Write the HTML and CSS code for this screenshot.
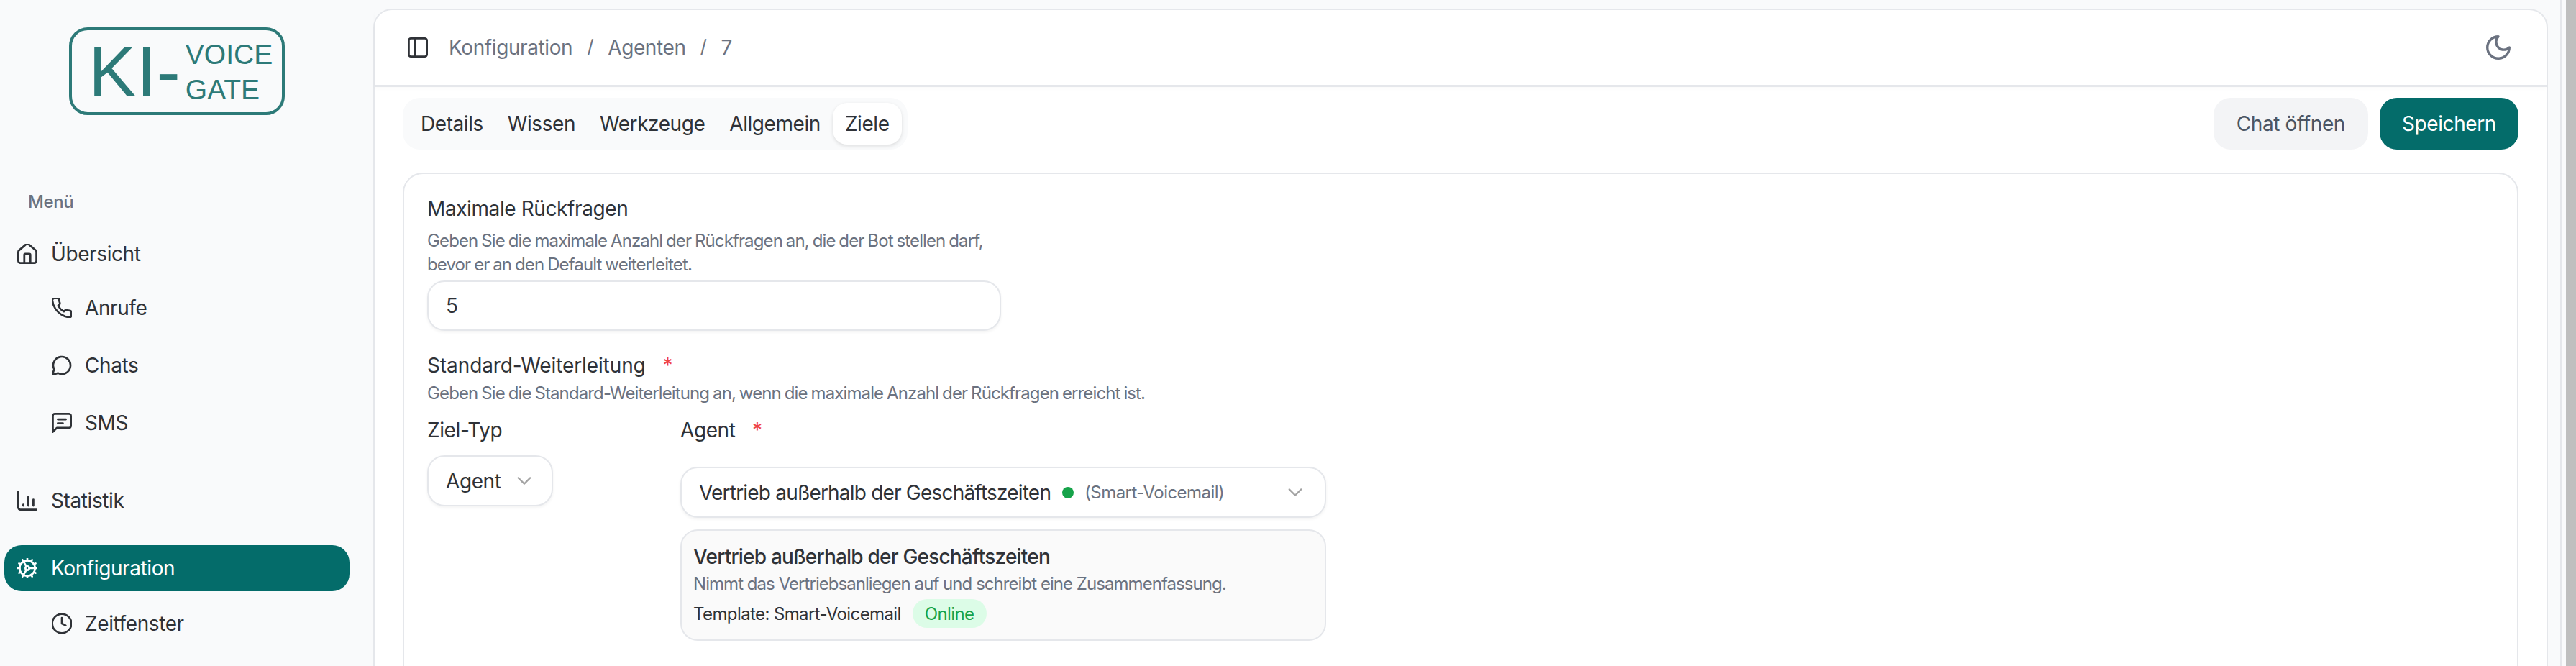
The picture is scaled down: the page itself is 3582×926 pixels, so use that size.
FILE: index.html
```html
<!DOCTYPE html>
<html lang="de">
<head>
<meta charset="utf-8">
<title>Agent 7 – Ziele</title>
<link rel="stylesheet" href="styles.css">
</head>
<body>
<aside class="sidebar">
  <div class="logo">
    <span class="logo-ki">KI-</span>
    <span class="logo-words"><span>VOICE</span><span>GATE</span></span>
  </div>
  <div class="menu-title">Menü</div>
  <nav class="nav">
    <a class="item">
      <svg class="icon" viewBox="2 2 20 20"><path d="M15 21v-8a1 1 0 0 0-1-1h-4a1 1 0 0 0-1 1v8"/><path d="M3 10a2 2 0 0 1 .709-1.528l7-5.999a2 2 0 0 1 2.582 0l7 5.999A2 2 0 0 1 21 10v9a2 2 0 0 1-2 2H5a2 2 0 0 1-2-2z"/></svg>
      <span>Übersicht</span>
    </a>
    <div class="sub sub-first">
      <a class="item sub-item">
        <svg class="icon" viewBox="1.5 1.5 21 21"><path d="M22 16.92v3a2 2 0 0 1-2.18 2 19.79 19.79 0 0 1-8.63-3.07 19.5 19.5 0 0 1-6-6 19.79 19.79 0 0 1-3.07-8.67A2 2 0 0 1 4.11 2h3a2 2 0 0 1 2 1.72 12.84 12.84 0 0 0 .7 2.81 2 2 0 0 1-.45 2.11L8.09 9.91a16 16 0 0 0 6 6l1.27-1.27a2 2 0 0 1 2.11-.45 12.84 12.84 0 0 0 2.81.7A2 2 0 0 1 22 16.92z"/></svg>
        <span>Anrufe</span>
      </a>
      <a class="item sub-item">
        <svg class="icon" viewBox="1.5 1.5 21 21"><path d="M7.9 20A9 9 0 1 0 4 16.1L2 22Z"/></svg>
        <span>Chats</span>
      </a>
      <a class="item sub-item">
        <svg class="icon" viewBox="2 2 20 20"><path d="M21 15a2 2 0 0 1-2 2H7l-4 4V5a2 2 0 0 1 2-2h14a2 2 0 0 1 2 2z"/><path d="M8 8.5h8"/><path d="M8 12.5h5"/></svg>
        <span>SMS</span>
      </a>
    </div>
    <a class="item item-stat">
      <svg class="icon" viewBox="2 2 20 20"><path d="M3 3v16a2 2 0 0 0 2 2h16"/><path d="M8 17v-1"/><path d="M13 17V8"/><path d="M18 17v-6"/></svg>
      <span>Statistik</span>
    </a>
    <a class="item item-active">
      <svg class="icon" viewBox="1.5 1.5 21 21"><path d="M12 20a8 8 0 1 0 0-16 8 8 0 0 0 0 16Z"/><path d="M12 14a2 2 0 1 0 0-4 2 2 0 0 0 0 4Z"/><path d="M12 2v2"/><path d="M12 22v-2"/><path d="m17 20.66-1-1.73"/><path d="M11 10.27 7 3.34"/><path d="m20.66 17-1.73-1"/><path d="m3.34 7 1.73 1"/><path d="M14 12h8"/><path d="M2 12h2"/><path d="m20.66 7-1.73 1"/><path d="m3.34 17 1.73-1"/><path d="m17 3.34-1 1.73"/><path d="m11 13.73-4 6.93"/></svg>
      <span>Konfiguration</span>
    </a>
    <div class="sub sub-last">
      <a class="item sub-item">
        <svg class="icon" viewBox="1.5 1.5 21 21"><circle cx="12" cy="12" r="10"/><path d="M12 6v6l4 2"/></svg>
        <span>Zeitfenster</span>
      </a>
    </div>
  </nav>
</aside>

<div class="main-wrap">
  <main class="card-main">
    <header class="topbar">
      <svg class="icon icon-panel" viewBox="2 2 20 20"><rect x="3" y="3" width="18" height="18" rx="2"/><path d="M9 3v18"/></svg>
      <ol class="crumbs">
        <li>Konfiguration</li>
        <li class="sep">/</li>
        <li>Agenten</li>
        <li class="sep">/</li>
        <li>7</li>
      </ol>
      <svg class="icon icon-moon" viewBox="2 2 20 20"><path d="M12 3a6 6 0 0 0 9 9 9 9 0 1 1-9-9Z"/></svg>
    </header>

    <div class="toolbar">
      <div class="tabs">
        <span class="tab">Details</span>
        <span class="tab">Wissen</span>
        <span class="tab">Werkzeuge</span>
        <span class="tab">Allgemein</span>
        <span class="tab tab-active">Ziele</span>
      </div>
      <div class="actions">
        <button class="btn btn-soft">Chat öffnen</button>
        <button class="btn btn-primary">Speichern</button>
      </div>
    </div>

    <section class="panel">
      <div class="label">Maximale Rückfragen</div>
      <p class="hint hint-wrap">Geben Sie die maximale Anzahl der Rückfragen an, die der Bot stellen darf, bevor er an den Default weiterleitet.</p>
      <div class="field field-number">5</div>

      <div class="label label-second">Standard-Weiterleitung <span class="req">*</span></div>
      <p class="hint">Geben Sie die Standard-Weiterleitung an, wenn die maximale Anzahl der Rückfragen erreicht ist.</p>

      <div class="target-row">
        <div class="target-type">
          <div class="label">Ziel-Typ</div>
          <div class="field field-type">
            <span>Agent</span>
            <svg class="chev" viewBox="5 8 14 8"><path d="m6 9 6 6 6-6"/></svg>
          </div>
        </div>
        <div class="target-agent">
          <div class="label">Agent <span class="req">*</span></div>
          <div class="field field-agent">
            <span class="agent-name">Vertrieb außerhalb der Geschäftszeiten</span>
            <i class="dot"></i>
            <span class="muted">(Smart-Voicemail)</span>
            <svg class="chev chev-end" viewBox="5 8 14 8"><path d="m6 9 6 6 6-6"/></svg>
          </div>
          <div class="preview">
            <div class="preview-title">Vertrieb außerhalb der Geschäftszeiten</div>
            <div class="preview-desc">Nimmt das Vertriebsanliegen auf und schreibt eine Zusammenfassung.</div>
            <div class="preview-meta">
              <span>Template: Smart-Voicemail</span>
              <span class="badge">Online</span>
            </div>
          </div>
        </div>
      </div>
    </section>
  </main>
</div>
<div class="gutter"></div>
<div class="scrollbar"></div>
</body>
</html>
```
FILE: styles.css
```css
* { box-sizing: border-box; }

html, body {
  margin: 0;
  height: 926px;
  overflow: hidden;
}

body {
  display: flex;
  background: #f9fafb;
  color: #2f3237;
  font-family: Inter, "Liberation Sans", sans-serif;
  font-size: 28px;
  letter-spacing: -0.4px;
}

.icon {
  width: 28px;
  height: 28px;
  flex: none;
  fill: none;
  stroke: currentColor;
  stroke-width: 2;
  stroke-linecap: round;
  stroke-linejoin: round;
}

/* Sidebar */
.sidebar {
  width: 519px;
  flex: none;
  padding: 38px 0 0 6px;
}

.logo {
  width: 300px;
  height: 122px;
  margin-left: 90px;
  padding-left: 23px;
  display: flex;
  align-items: center;
  gap: 7px;
  border: 4px solid #2d7a78;
  border-radius: 26px;
  color: #2d7a78;
  font-family: "Liberation Sans", Arial, sans-serif;
  letter-spacing: 0;
}

.logo-ki {
  font-size: 100px;
  line-height: 1;
}

.logo-words {
  display: flex;
  flex-direction: column;
  font-size: 39px;
  line-height: 49px;
  margin-top: 2px;
}

.menu-title {
  margin: 106px 0 0 33px;
  height: 30px;
  line-height: 30px;
  font-size: 24px;
  font-weight: 500;
  color: #6b7280;
}

.nav {
  display: flex;
  flex-direction: column;
  margin-top: 25px;
}

.item {
  width: 480px;
  height: 64px;
  padding-left: 18px;
  display: flex;
  align-items: center;
  gap: 19px;
  border-radius: 24px;
}

.sub {
  display: flex;
  flex-direction: column;
  gap: 16px;
}

.sub-first { margin-top: 11px; }
.sub-last { margin-top: 13px; }

.sub-item { padding-left: 66px; gap: 18px; }

.item-stat { margin-top: 44px; }

.item-active {
  margin-top: 30px;
  background: #046c6a;
  color: #fff;
}

/* Main shell */
.main-wrap {
  width: 3043px;
  flex: none;
  padding: 12px 17px 0 0;
  border-right: 2px solid #e5e7eb;
}

.card-main {
  height: 914px;
  background: #fff;
  border: 2px solid #e5e7eb;
  border-bottom: 0;
  border-radius: 26px 26px 0 0;
}

.gutter { width: 6px; flex: none; }
.scrollbar { width: 14px; flex: none; background: #bfbfbf; }

.topbar {
  height: 107px;
  padding: 0 50px 0 46px;
  display: flex;
  align-items: center;
  border-bottom: 3px solid #e5e7eb;
  box-shadow: 0 3px 4px rgba(0, 0, 0, 0.02);
}

.icon-moon {
  margin-left: auto;
  width: 34px;
  height: 34px;
  color: #6b7280;
}

.crumbs {
  list-style: none;
  margin: 0 0 0 29px;
  padding: 0;
  display: flex;
  gap: 20px;
  color: #6b7280;
}

.sep { font-size: 26px; }

.toolbar {
  padding: 15px 39px 0;
  display: flex;
  justify-content: space-between;
}

.tabs {
  height: 72px;
  padding: 7px 8px;
  display: flex;
  background: #f9fafb;
  border-radius: 24px;
}

.tab {
  height: 58px;
  padding: 0 17px;
  display: flex;
  align-items: center;
  border-radius: 20px;
  letter-spacing: -0.44px;
}

.tab-active {
  background: #fff;
  box-shadow: 0 2px 5px rgba(0, 0, 0, 0.12);
}

.actions { display: flex; gap: 16px; }

.btn {
  height: 72px;
  padding: 0 32px;
  border: 0;
  border-radius: 24px;
  font: inherit;
  letter-spacing: inherit;
}

.btn-soft { background: #f3f4f6; color: #4b5563; }
.btn-primary { background: #046c6a; color: #fff; padding: 0 31px; }

/* Form panel */
.panel {
  margin: 32px 39px 0;
  height: 700px;
  padding: 28px 32px 0;
  border: 2px solid #e5e7eb;
  border-radius: 28px 28px 0 0;
}

.label {
  height: 40px;
  line-height: 40px;
}

.label-second { margin-top: 28px; letter-spacing: -0.1px; }

.req {
  margin-left: 16px;
  color: #ef4444;
}

.hint {
  margin: 2px 0 0;
  font-size: 24px;
  line-height: 33px;
  color: #6b7280;
  letter-spacing: -0.88px;
  word-spacing: -1px;
}

.hint-wrap {
  width: 790px;
  margin-top: 8px;
}

.field {
  background: #fff;
  border: 2px solid #e5e7eb;
  border-radius: 24px;
  box-shadow: 0 2px 4px rgba(0, 0, 0, 0.05);
  display: flex;
  align-items: center;
  padding-left: 24px;
}

.field-number {
  width: 798px;
  height: 70px;
  margin-top: 6px;
}

.target-row {
  display: flex;
  margin-top: 15px;
}

.target-type { width: 352px; flex: none; }

.field-type {
  width: 175px;
  height: 71px;
  margin-top: 15px;
  gap: 22px;
}

.chev {
  width: 20px;
  height: 11px;
  flex: none;
  fill: none;
  stroke: #a3a3a3;
  stroke-width: 1.6;
  stroke-linecap: round;
  stroke-linejoin: round;
}

.target-agent { width: 898px; flex: none; }

.field-agent {
  height: 71px;
  margin-top: 31px;
  padding-right: 31px;
}

.agent-name { letter-spacing: -0.8px; }

.dot {
  width: 16px;
  height: 16px;
  margin: 0 15px 0 16px;
  border-radius: 50%;
  background: #16a34a;
}

.muted {
  font-size: 24px;
  color: #6b7280;
  letter-spacing: -0.55px;
}

.chev-end { margin-left: auto; }

.preview {
  height: 155px;
  margin-top: 16px;
  padding: 17px 16px 0;
  background: #fafafa;
  border: 2px solid #e5e7eb;
  border-radius: 24px;
}

.preview-title {
  height: 38px;
  line-height: 38px;
  font-weight: 500;
  letter-spacing: -0.8px;
}

.preview-desc {
  margin-top: 2px;
  height: 34px;
  line-height: 34px;
  font-size: 24px;
  color: #6b7280;
  letter-spacing: -0.95px;
}

.preview-meta {
  margin-top: 4px;
  display: flex;
  align-items: center;
  gap: 16px;
  font-size: 24px;
  letter-spacing: -0.6px;
}

.badge {
  height: 40px;
  padding: 0 17px;
  display: flex;
  align-items: center;
  border-radius: 20px;
  background: #dcfce7;
  color: #16a34a;
}
```
